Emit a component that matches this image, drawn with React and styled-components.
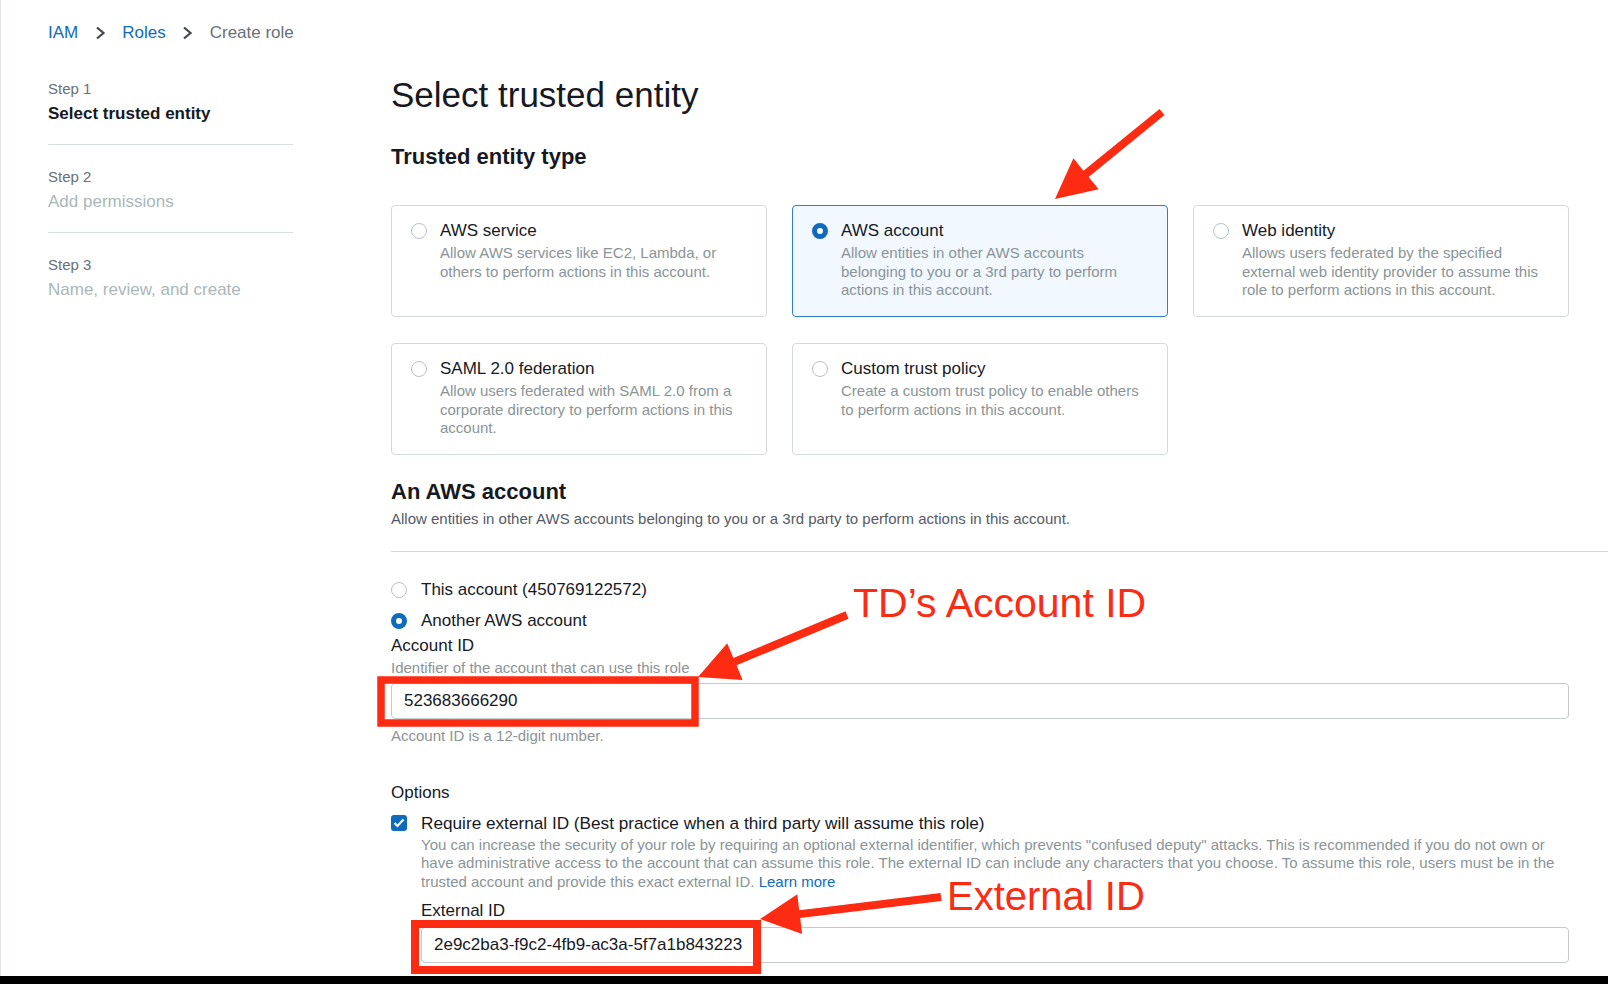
import React from 'react'
import styled, { createGlobalStyle } from 'styled-components'

const font = `"Liberation Sans", Arial, Helvetica, sans-serif`
const red = '#fd2b12'
const blue = '#0f6cbd'

const Global = createGlobalStyle`
  body {
    margin: 0;
    font-family: ${font};
    color: #16191f;
    background: #fff;
    -webkit-font-smoothing: antialiased;
  }
  * { box-sizing: border-box; }
`

const Page = styled.div`
  position: relative;
  height: 984px;
  display: flex;
  flex-direction: column;
  overflow: hidden;
  box-shadow: inset 1px 0 0 #e3e6e8;
`

const Content = styled.div`
  flex: 1;
  padding: 23px 0 0 48px;
  overflow: hidden;
`

const BottomBar = styled.div`
  height: 8px;
  background: #000;
`

const Crumbs = styled.nav`
  display: flex;
  align-items: center;
  gap: 16.5px;
  font-size: 17px;
  line-height: 20px;
`

const Crumb = styled.a`
  color: ${p => p.$current ? '#687078' : blue};
  text-decoration: none;
`

const Chevron = () => (
  <svg width="11" height="14" viewBox="0 0 11 14">
    <polyline points="2,1.5 8.5,7 2,12.5" fill="none" stroke="#414750" strokeWidth="2.2" />
  </svg>
)

const Columns = styled.div`
  display: flex;
  gap: 98px;
  margin-top: 14px;
`

const Sidebar = styled.aside`
  width: 245px;
  flex: none;
`

const Step = styled.div`
  padding: 23px 0 20px;
  border-bottom: 1px solid #d9dde0;
  &:last-child { border-bottom: none; }
`

const StepNum = styled.div`
  font-size: 15px;
  line-height: 18px;
  color: #687078;
`

const StepName = styled.div`
  margin-top: 6px;
  font-size: 17px;
  line-height: 20px;
  font-weight: ${p => p.$active ? 700 : 400};
  color: ${p => p.$active ? '#16191f' : '#aab7b8'};
`

const Main = styled.main`
  flex: 1;
  min-width: 0;
  padding-right: 39px;
`

const Title = styled.h1`
  margin: 18px 0 0;
  font-size: 35px;
  line-height: 40px;
  font-weight: 400;
  color: #16191f;
`

const Heading = styled.h2`
  margin: ${p => p.$gap}px 0 0;
  font-size: 22px;
  line-height: 26px;
  font-weight: 700;
  color: #16191f;
`

const TileGrid = styled.div`
  margin-top: 35px;
  display: grid;
  grid-template-columns: repeat(3, 1fr);
  column-gap: 25px;
  row-gap: 26px;
`

const Tile = styled.div`
  height: 112px;
  display: flex;
  gap: 13px;
  padding: 14px 22px 0 19px;
  border: 1px solid ${p => p.$selected ? '#2f7fd0' : '#d5d9dc'};
  border-radius: 4px;
  background: ${p => p.$selected ? '#f1f8ff' : '#fff'};
`

const Radio = styled.span`
  flex: none;
  width: 16px;
  height: 16px;
  margin-top: 3px;
  border-radius: 50%;
  background: #fff;
  border: ${p => p.$checked ? `5px solid ${blue}` : '1px solid #b9c1c4'};
`

const TileText = styled.div`
  min-width: 0;
`

const TileTitle = styled.div`
  font-size: 17px;
  line-height: 22px;
  color: #16191f;
`

const Hint = styled.div`
  margin-top: ${p => p.$gap || 0}px;
  font-size: 15px;
  line-height: ${p => p.$lh || 18}px;
  color: ${p => p.$dark ? '#545b64' : '#8a9496'};
`

const Divider = styled.hr`
  margin: 23px -39px 0 0;
  border: none;
  height: 1px;
  background: #d5d9dc;
`

const RadioGroup = styled.div`
  margin-top: 27px;
  display: flex;
  flex-direction: column;
  gap: 9px;
`

const Option = styled.label`
  display: flex;
  gap: 14px;
  font-size: 17px;
  line-height: 22px;
`

const Label = styled.div`
  margin-top: ${p => p.$gap}px;
  font-size: 17px;
  line-height: 22px;
  color: #16191f;
`

const Input = styled.input`
  display: block;
  width: 100%;
  height: 36px;
  margin-top: ${p => p.$gap}px;
  padding: 0 12px;
  border: 1px solid #c3c9cc;
  border-radius: 4px;
  font: 17px ${font};
  color: #16191f;
  background: #fff;
  outline: none;
`

const CheckRow = styled.div`
  margin-top: 8px;
  display: flex;
  gap: 14px;
`

const Checkbox = styled.span`
  flex: none;
  width: 16px;
  height: 16px;
  margin-top: 3px;
  border-radius: 3px;
  background: ${blue};
  display: flex;
  align-items: center;
  justify-content: center;
`

const CheckBody = styled.div`
  flex: 1;
  min-width: 0;
`

const CheckTitle = styled(TileTitle)`
  font-size: 17.2px;
`

const LongHint = styled(Hint)`
  max-width: 1135px;
`

const Link = styled.a`
  color: ${blue};
  text-decoration: none;
`

const Overlay = styled.svg`
  position: absolute;
  left: 0;
  top: 0;
  pointer-events: none;
`

const Callout = styled.span`
  position: absolute;
  left: ${p => p.$x}px;
  top: ${p => p.$y}px;
  font-size: ${p => p.$size}px;
  line-height: 0.8;
  color: ${red};
  white-space: nowrap;
`

const arrow = ([x1, y1], [x2, y2], shaft = 8, len = 40, half = 20) => {
  const d = Math.hypot(x2 - x1, y2 - y1)
  const ux = (x2 - x1) / d
  const uy = (y2 - y1) / d
  const nx = -uy
  const ny = ux
  const bx = x2 - ux * len
  const by = y2 - uy * len
  const s = shaft / 2
  const pts = [
    [x1 + nx * s, y1 + ny * s],
    [bx + nx * s, by + ny * s],
    [bx + nx * half, by + ny * half],
    [x2, y2],
    [bx - nx * half, by - ny * half],
    [bx - nx * s, by - ny * s],
    [x1 - nx * s, y1 - ny * s],
  ]
  return pts.map(p => p.map(v => v.toFixed(1)).join(',')).join(' ')
}

const tiles = [
  { title: 'AWS service', desc: 'Allow AWS services like EC2, Lambda, or others to perform actions in this account.' },
  { title: 'AWS account', desc: 'Allow entities in other AWS accounts belonging to you or a 3rd party to perform actions in this account.', selected: true },
  { title: 'Web identity', desc: 'Allows users federated by the specified external web identity provider to assume this role to perform actions in this account.' },
  { title: 'SAML 2.0 federation', desc: 'Allow users federated with SAML 2.0 from a corporate directory to perform actions in this account.' },
  { title: 'Custom trust policy', desc: 'Create a custom trust policy to enable others to perform actions in this account.' },
]

const steps = [
  { num: 'Step 1', name: 'Select trusted entity', active: true },
  { num: 'Step 2', name: 'Add permissions' },
  { num: 'Step 3', name: 'Name, review, and create' },
]

export default function App() {
  return (
    <Page>
      <Global />
      <Content>
        <Crumbs>
          <Crumb href="#">IAM</Crumb>
          <Chevron />
          <Crumb href="#">Roles</Crumb>
          <Chevron />
          <Crumb $current>Create role</Crumb>
        </Crumbs>
        <Columns>
          <Sidebar>
            {steps.map(s => (
              <Step key={s.num}>
                <StepNum>{s.num}</StepNum>
                <StepName $active={s.active}>{s.name}</StepName>
              </Step>
            ))}
          </Sidebar>
          <Main>
            <Title>Select trusted entity</Title>
            <Heading $gap={29}>Trusted entity type</Heading>
            <TileGrid>
              {tiles.map(t => (
                <Tile key={t.title} $selected={t.selected}>
                  <Radio $checked={t.selected} />
                  <TileText>
                    <TileTitle>{t.title}</TileTitle>
                    <Hint $gap={2} $lh={18.5}>{t.desc}</Hint>
                  </TileText>
                </Tile>
              ))}
            </TileGrid>

            <Heading $gap={24}>An AWS account</Heading>
            <Hint $gap={5} $dark>Allow entities in other AWS accounts belonging to you or a 3rd party to perform actions in this account.</Hint>
            <Divider />

            <RadioGroup>
              <Option><Radio />This account (450769122572)</Option>
              <Option><Radio $checked />Another AWS account</Option>
            </RadioGroup>
            <Label $gap={2.5}>Account ID</Label>
            <Hint $gap={2}>Identifier of the account that can use this role</Hint>
            <Input $gap={6} readOnly value="523683666290" />
            <Hint $gap={8}>Account ID is a 12-digit number.</Hint>

            <Label $gap={37}>Options</Label>
            <CheckRow>
              <Checkbox>
                <svg width="12" height="10" viewBox="0 0 12 10">
                  <polyline points="1.5,5 4.5,8 10.5,1.5" fill="none" stroke="#fff" strokeWidth="2.2" />
                </svg>
              </Checkbox>
              <CheckBody>
                <CheckTitle>Require external ID (Best practice when a third party will assume this role)</CheckTitle>
                <LongHint $gap={2} $lh={18.5}>
                  You can increase the security of your role by requiring an optional external identifier, which prevents "confused deputy" attacks. This is recommended if you do not own or have administrative access to the account that can assume this role. The external ID can include any characters that you choose. To assume this role, users must be in the trusted account and provide this exact external ID. <Link href="#">Learn more</Link>
                </LongHint>
                <Label $gap={8.5}>External ID</Label>
                <Input $gap={5.5} readOnly value="2e9c2ba3-f9c2-4fb9-ac3a-5f7a1b843223" />
              </CheckBody>
            </CheckRow>
          </Main>
        </Columns>
      </Content>
      <BottomBar />

      <Overlay width="1608" height="984" viewBox="0 0 1608 984">
        <polygon points={arrow([1162, 112], [1055, 199])} fill={red} />
        <polygon points={arrow([847, 615], [698, 677])} fill={red} />
        <polygon points={arrow([941, 897], [760, 919])} fill={red} />
        <rect x="381" y="680" width="314" height="43" fill="none" stroke={red} strokeWidth="7.5" />
        <rect x="415" y="924" width="342" height="46" fill="none" stroke={red} strokeWidth="8" />
      </Overlay>
      <Callout $x={853} $y={587} $size={41}>TD’s Account ID</Callout>
      <Callout $x={947} $y={880} $size={40}>External ID</Callout>
    </Page>
  )
}
